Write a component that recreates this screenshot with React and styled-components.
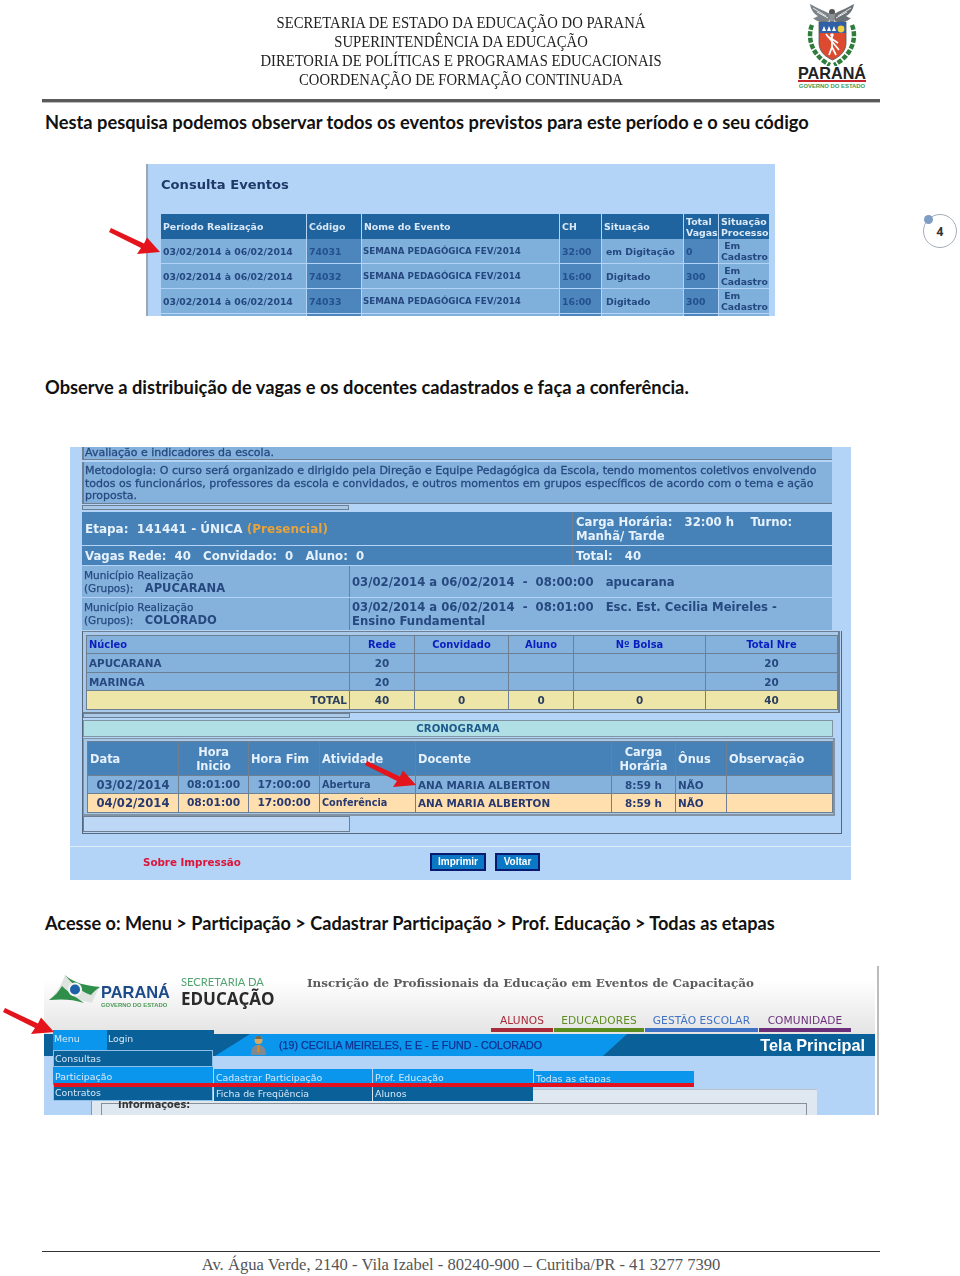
import React from "react";
import styled, { createGlobalStyle } from "styled-components";

const Global = createGlobalStyle`
  html, body { margin: 0; padding: 0; background: #fff; }
  #root { width: 960px; height: 1276px; overflow: hidden; }
`;

const Page = styled.div`
  width: 960px; height: 1276px; display: flex; flex-direction: column; position: relative;
  overflow: hidden; background: #fff; color: #111; font-family: "Liberation Sans", sans-serif;
`;

/* ---------- header ---------- */
const Header = styled.header`
  margin: 0 80px 0 42px; height: 102px; box-sizing: border-box; display: grid;
  grid-template-columns: 1fr 520px 1fr; border-bottom: 3px solid #5a5a5a; box-shadow: 0 1px 0 #bbb;
`;
const HeaderTitles = styled.div`
  grid-column: 2; padding-top: 13px; text-align: center; color: #222; white-space: nowrap;
  font: 400 16.4px/19px "Liberation Serif", serif; transform: scaleX(0.895);
`;
const LogoBox = styled.div`
  grid-column: 3; margin: 3px 0 0 77px; width: 68px; display: flex; flex-direction: column; align-items: center;
`;
const LogoWord = styled.div`
  font: 700 16.2px/14px "Liberation Sans", sans-serif; color: #222; border-bottom: 2px solid #c8252c; width: 68px; text-align: center; height: 14px;
`;
const LogoSub = styled.div`
  font: 700 5.9px/8px "Liberation Sans", sans-serif; color: #3f9a52; white-space: nowrap;
`;

const Heading = styled.h2`
  margin: ${p => p.$top}px 0 0 45px; font: 700 ${p => p.$size}px/22px Lato, "Noto Sans", sans-serif; color: #111; white-space: nowrap;
`;

/* ---------- consulta eventos ---------- */
const ConsultaRow = styled.div`
  margin: 31px 0 0 146px; display: flex; align-items: flex-start;
`;
const ConsultaShot = styled.section`
  width: 629px; height: 152px; box-sizing: border-box; overflow: hidden; background: #b3d3f7;
  border-left: 2px solid #9aa7b5; padding-left: 13px; filter: blur(0.3px);
`;
const ConsultaTitle = styled.h3`
  margin: 0; height: 50px; font: 700 13.1px/41px "DejaVu Sans", sans-serif; color: #1f3a68;
`;
const ConsultaGrid = styled.div`
  display: grid; grid-template-columns: 145px 54px 197px 41px 81px 34px 50px; column-gap: 1px; row-gap: 1px;
  grid-auto-rows: 24px; width: 608px;
`;
const ConsultaHead = styled.div`
  background: #1f639f; color: #dbe9f7; font: 700 9.4px/11px "DejaVu Sans", sans-serif; padding: 0 2px;
  display: flex; align-items: center; height: 25px; margin-bottom: -1px;
`;
const ConsultaCell = styled.div`
  background: ${p => (p.$dark ? "#4c86bd" : "#7fb0dc")}; color: ${p => (p.$dark ? "#24508c" : "#24477e")};
  font: 700 ${p => p.$size || 9.3}px/11px "DejaVu Sans", sans-serif; padding: ${p => p.$pad || "0 2px"};
  display: flex; align-items: center; white-space: nowrap; overflow: hidden;
`;
const PageBadge = styled.div`
  margin: 50px 0 0 148px; width: 34px; height: 34px; box-sizing: border-box; border: 1px solid #a5adb8; border-radius: 50%;
  position: relative; display: flex; align-items: center; justify-content: center; font: 700 12px "Noto Sans", sans-serif; color: #333;
  &::before { content: ""; position: absolute; left: 0; top: 0; width: 9px; height: 9px; border-radius: 50%; background: #7f9cc4; }
`;

/* ---------- form shot ---------- */
const FormShot = styled.section`
  margin: 49px 0 0 70px; width: 781px; height: 433px; background: #b3d3f7; display: flex; flex-direction: column; overflow: hidden;
  font-family: "DejaVu Sans", sans-serif; color: #27497f; filter: blur(0.3px);
`;
const FormBody = styled.div`
  padding-left: 12px; display: flex; flex-direction: column;
`;
const TextRow = styled.div`
  width: 750px; height: ${p => p.$h}px; box-sizing: border-box; background: #85b2dd; border-left: 2px solid #6d7f90;
  border-bottom: 1px solid #6d7f90; padding: ${p => p.$pt || 0}px 0 0 1px; margin-bottom: ${p => p.$mb || 0}px;
  font: 400 11px/12.5px "DejaVu Sans", sans-serif; -webkit-text-stroke: 0.3px #27497f; white-space: nowrap;
`;
const ThinTab = styled.div`
  width: 267px; height: ${p => p.$h}px; box-sizing: border-box; border: 1px solid #6d7f90; background: ${p => p.$bg || "#a9c9ea"}; margin: ${p => p.$m || 0};
`;
const HeadRow = styled.div`
  width: 750px; height: ${p => p.$h}px; display: grid; grid-template-columns: 490px 259px; column-gap: 1px; margin-bottom: 1px; background: #6d7f90;
`;
const HeadCell = styled.div`
  background: #4682b8; color: #e6f1fb; font: 700 ${p => p.$size || 11.7}px/14px "DejaVu Sans", sans-serif; padding: 0 2px 0 3px; display: flex; align-items: center; white-space: nowrap;
`;
const Presencial = styled.span`
  color: #e8a33a;
`;
const PlaceRow = styled.div`
  width: 750px; height: ${p => p.$h}px; display: grid; grid-template-columns: 267px 482px; column-gap: 1px; margin-bottom: 1px; background: #6d7f90;
`;
const PlaceCell = styled.div`
  background: #85b2dd; color: #27497f; padding: 0 2px; display: flex; flex-direction: column; justify-content: center; white-space: nowrap;
  font: 700 11.65px/14px "DejaVu Sans", sans-serif;
`;
const PlaceSmall = styled.div`
  font: 400 10.5px/13px "DejaVu Sans", sans-serif; -webkit-text-stroke: 0.25px #27497f;
  b { font: 700 11.5px/13px "DejaVu Sans", sans-serif; margin-left: 8px; -webkit-text-stroke: 0; }
`;
const Frame = styled.div`
  width: 760px; height: 203px; box-sizing: border-box; border: 1px solid #56687a; border-top-width: 0; display: flex; flex-direction: column; align-items: flex-start;
`;
const NucleoBox = styled.div`
  width: 757px; height: 82px; box-sizing: border-box; border: 1px solid #6d7f90; border-left: 0; padding: 4px 2px 0 4px;
  background: #a9c9ea; flex: none; border-right-width: 2px;
`;
const DataGrid = styled.div`
  display: grid; grid-template-columns: ${p => p.$cols}; grid-template-rows: ${p => p.$rows}; gap: ${p => p.$gap || "1px"}; background: #6d7f90; width: max-content;
  border: 1px solid #6d7f90; margin: -1px;
`;
const Cell = styled.div`
  background: ${p => ({ blue: "#85b2dd", gold: "#eee6a8", peach: "#ffdfae", head: "#4682b8" }[p.$tone])};
  color: ${p => ({ blue: "#27497f", gold: "#2b3f5f", peach: "#27396f", head: "#e6f1fb" }[p.$tone])};
  font: 700 ${p => p.$size || 10.4}px/${p => (p.$tall ? 14 : 12.5)}px "DejaVu Sans", sans-serif;
  padding: 1px 2px 0; display: flex; align-items: center; justify-content: ${p => (p.$center ? "center" : p.$right ? "flex-end" : "flex-start")};
  text-align: ${p => (p.$center ? "center" : "left")}; white-space: nowrap; overflow: hidden;
`;
const NucleoHead = styled(Cell)`
  color: #0a1ec0; font-size: 9.9px;
`;
const CronoBar = styled.div`
  width: 750px; height: 17px; box-sizing: border-box; margin-top: 2px; background: #b0e0e6; border: 1px solid #7f95a5; flex: none;
  font: 700 10.2px/16px "DejaVu Sans", sans-serif; text-align: center; color: #1f5a8c;
`;
const CronoBox = styled.div`
  width: 752px; height: 78px; box-sizing: border-box; margin-top: 1px; border: 1px solid #8293a3; border-right-width: 2px; border-bottom-width: 2px;
  padding: 3px 0 0 4px; background: #a9c9ea; flex: none;
`;
const FormFooter = styled.div`
  margin-top: 12px; height: 35px; border-top: 1px solid #e0ecfa; display: flex; align-items: center; padding-bottom: 3px; box-sizing: border-box;
`;
const PrintNote = styled.div`
  width: 360px; box-sizing: border-box; padding-left: 73px; color: #dc1438; font: 700 10.3px "DejaVu Sans", sans-serif;
`;
const ActionButton = styled.div`
  height: 18px; width: ${p => p.$w}px; box-sizing: border-box; background: #0a78c4; border: 2px solid #0a1a70; margin-right: 9px;
  color: #fff; font: 700 10px/14px "Liberation Sans", sans-serif; text-align: center;
`;

/* ---------- portal shot ---------- */
const PortalShot = styled.section`
  margin: 32px 0 0 44px; width: 835px; height: 149px; box-sizing: border-box; position: relative; background: #fff; padding-right: 2px; border-right: 2px solid #bcbcbc; overflow: hidden;
  font-family: "DejaVu Sans", sans-serif; filter: blur(0.3px);
`;
const BrandRow = styled.div`
  height: 68px; box-sizing: border-box; background: linear-gradient(#fff, #fff 20%, #e4e4e4); display: grid; grid-template-columns: 263px 1fr;
`;
const BrandLogos = styled.div`
  display: flex; padding: 9px 0 0 5px;
`;
const ParanaBlock = styled.div`
  margin: 9px 0 0 0; width: 80px; display: flex; flex-direction: column;
`;
const ParanaWord = styled.div`
  font: 700 16.4px/16px "Liberation Sans", sans-serif; color: #1c4b8c;
`;
const ParanaSub = styled.div`
  font: 700 5.9px/8px "Liberation Sans", sans-serif; color: #4a9a55; white-space: nowrap; margin-top: 1px;
`;
const SecBlock = styled.div`
  display: flex; flex-direction: column;
`;
const SecLine = styled.div`
  font: 400 11.2px/14px Lato, sans-serif; color: #4fa46f; white-space: nowrap;
`;
const EduLine = styled.div`
  font: 700 17px/19px "Open Sans", sans-serif; color: #2a2a2a; white-space: nowrap;
`;
const BrandRight = styled.div`
  display: flex; flex-direction: column; justify-content: space-between;
`;
const BrandTitle = styled.div`
  margin-top: 10px; font: 700 11.95px/15px "DejaVu Serif", serif; color: #5c5c5c; white-space: nowrap;
`;
const AreaTabs = styled.div`
  margin: 0 0 2px 184px; width: 361px; display: grid; grid-template-columns: 62px 90px 113px 92px; column-gap: 1px;
`;
const AreaTab = styled.div`
  text-align: center; font: 400 10.6px/16px "DejaVu Sans", sans-serif; letter-spacing: .1px; color: ${p => p.$c}; border-bottom: 4px solid ${p => p.$c}; white-space: nowrap;
`;
const NavBand = styled.div`
  height: 22px; background: #0a6098; display: flex;
`;
const NavCenter = styled.div`
  margin-left: 171px; width: 412px; box-sizing: border-box; background: #0a96ec; display: flex; align-items: center; padding-left: 36px; gap: 13px;
  clip-path: polygon(35px 0, 100% 0, calc(100% - 24px) 100%, 0 100%);
  color: #12308f; font: 400 10.7px "Liberation Sans", sans-serif; white-space: nowrap; -webkit-text-stroke: .25px #12308f;
`;
const NavTitle = styled.div`
  margin-left: auto; padding-right: 10px; font: 700 16.3px/22px "Liberation Sans", sans-serif; color: #fff;
`;
const ContentArea = styled.div`
  height: 59px; background: #b3d3f7; padding: 33px 0 0 47px; box-sizing: border-box;
`;
const ContentCard = styled.div`
  width: 726px; height: 30px; box-sizing: border-box; background: #dfe8f0; border-left: 1px solid #8a96a2; border-top: 1px solid #b9c2ca; padding: 13px 0 0 9px;
`;
const InnerFrame = styled.div`
  width: 706px; height: 30px; box-sizing: border-box; border: 1px solid #8a8f96; border-bottom: 0; padding-left: 16px;
  font: 700 9.8px/1px "DejaVu Sans", sans-serif; color: #333; position: relative; white-space: nowrap;
  &::after { content: ""; position: absolute; left: 368px; width: 248px; top: 11px; height: 1px; background: #8a8f96; }
`;
const MenuLayer = styled.div`
  position: absolute; left: 9px; top: 64px; display: flex; flex-direction: column;
  font: 400 9.4px/15px "DejaVu Sans", sans-serif; color: #d5e8fa; white-space: nowrap;
`;
const MenuTabs = styled.div`
  display: flex; height: 20px;
`;
const MenuTab = styled.div`
  width: ${p => p.$w}px; box-sizing: border-box; padding: 1px 0 0 1px; background: ${p => (p.$on ? "#0a96ec" : "#0a6098")};
`;
const MenuBody = styled.div`
  display: flex; align-items: flex-start;
`;
const MenuColumn = styled.div`
  display: flex; flex-direction: column; width: ${p => p.$w}px; margin-top: ${p => p.$top || 0}px; margin-right: ${p => p.$mr || 0}px;
`;
const MenuItem = styled.div`
  height: ${p => p.$h || 17}px; box-sizing: border-box; padding: ${p => p.$pad || "1px 0 0 2px"}; background: ${p => (p.$on ? "#0a96ec" : "#0a6098")};
  outline: ${p => (p.$framed ? "1px solid #8fbfe6" : "none")}; outline-offset: -1px;
`;
const RedRule = styled.div`
  position: absolute; left: 10px; top: 117px; width: 640px; height: 4px; background: #e3101e;
`;

/* ---------- footer ---------- */
const Footer = styled.footer`
  margin: 136px 80px 0 42px; border-top: 1px solid #333; padding-top: 3px; text-align: center;
  font: 400 16.6px/19px "Liberation Serif", serif; color: #555; white-space: nowrap;
`;
const ArrowSvg = styled.svg`
  position: absolute; left: ${p => p.$x}px; top: ${p => p.$y}px; overflow: visible;
`;

const Arrow = ({ x, y }) => (
  <ArrowSvg $x={x} $y={y} width="50" height="25" viewBox="0 0 50 25">
    <path d="M1 0 L34 15.5 L37 9.5 L50 24 L27 26 L31 20 L-1 4 Z" fill="#e3141c" />
  </ArrowSvg>
);

const CoatOfArms = () => (
  <svg width="62" height="63" viewBox="0 0 62 63">
    <path d="M31 12 C26 9 18 6 9 1 C10 7 13 11 17 13 C15 14 14 15 12 15 C17 20 24 20 28 18 Z" fill="#7d8489" />
    <path d="M31 12 C36 9 44 6 53 1 C52 7 49 11 45 13 C47 14 48 15 50 15 C45 20 38 20 34 18 Z" fill="#6b7277" />
    <path d="M12 5 L25 13 M50 5 L37 13 M16 9 L27 15 M46 9 L35 15" stroke="#e8e8e8" strokeWidth="1" />
    <circle cx="31" cy="9" r="3" fill="#555" />
    <path d="M28 11 H34 L33 19 H29 Z" fill="#8c9196" />
    <path d="M11 22 C6 34 10 52 29 62" fill="none" stroke="#2f7d3a" strokeWidth="4.5" strokeDasharray="5 1.5" />
    <path d="M51 22 C56 34 52 52 33 62" fill="none" stroke="#2f7d3a" strokeWidth="4.5" strokeDasharray="5 1.5" />
    <path d="M18 19 H45 V40 C45 49 38 54 31.5 57 C25 54 18 49 18 40 Z" fill="#dc4a30" stroke="#555" strokeWidth="0.8" />
    <path d="M18 19 H45 V30 H18 Z" fill="#2f5fa6" />
    <path d="M21 28 L23 23 L25 28 Z M26 28 L28 23 L30 28 Z M31 28 L33 23 L35 28 Z" fill="#fff" />
    <circle cx="40" cy="26" r="3.4" fill="#f2d23c" />
    <path d="M31 33 L31 44 L28 52 M31 44 L35 52 M31 36 L26 33 M31 36 L37 40 M25 31 L38 47" stroke="#fff" strokeWidth="1.7" fill="none" />
    <circle cx="31" cy="32" r="1.8" fill="#fff" />
  </svg>
);

const FlagLogo = () => (
  <svg width="52" height="30" viewBox="0 0 52 30">
    <path d="M0 25 C7 19 13 9 16 0 C25 8 38 11 51 12 C47 18 45 23 43 28 C30 24 14 23 0 25Z" fill="#dfe3e0" />
    <path d="M16 0 C24 8 38 11 51 12 C47 15 44 17 42 20 C33 17 23 9 16 0Z" fill="#2f8f4a" />
    <path d="M0 25 C6 21 10 16 13 11 C19 17 28 23 35 28 C24 24 12 24 0 25Z" fill="#2f8f4a" />
    <circle cx="26" cy="14.5" r="7" fill="#f2f4f2" />
    <circle cx="26" cy="14.5" r="5" fill="#1f5fa8" />
  </svg>
);

const Avatar = () => (
  <svg width="15" height="20" viewBox="0 0 15 20">
    <circle cx="7.5" cy="5" r="4" fill="#d9a860" />
    <path d="M4 3 C5 0 10 0 11 3 L11 4 L4 4 Z" fill="#7a6a50" />
    <path d="M0 20 C0 13 3 10 7.5 10 C12 10 15 13 15 20 Z" fill="#7f8a90" />
    <path d="M6.5 10 H8.5 L9 16 L7.5 18 L6 16 Z" fill="#d8862c" />
  </svg>
);

const consultaRows = [
  ["74031", "32:00", "em Digitação", "0"],
  ["74032", "16:00", "Digitado", "300"],
  ["74033", "16:00", "Digitado", "300"],
];

const NucleoCols = "262px 64px 93px 64px 131px 131px";
const CronoCols = "90px 69px 70px 95px 195px 63px 50px 105px";

const cronoHead = [
  ["Data", false], ["Hora\nInicio", true], ["Hora Fim", false], ["Atividade", false],
  ["Docente", false], ["Carga\nHorária", true], ["Ônus", false], ["Observação", false],
];
const cronoRows = [
  ["blue", "03/02/2014", "08:01:00", "17:00:00", "Abertura"],
  ["peach", "04/02/2014", "08:01:00", "17:00:00", "Conferência"],
];

export default function App() {
  return (
    <Page>
      <Global />
      <Header>
        <HeaderTitles>
          SECRETARIA DE ESTADO DA EDUCAÇÃO DO PARANÁ<br />
          SUPERINTENDÊNCIA DA EDUCAÇÃO<br />
          DIRETORIA DE POLÍTICAS E PROGRAMAS EDUCACIONAIS<br />
          COORDENAÇÃO DE FORMAÇÃO CONTINUADA
        </HeaderTitles>
        <LogoBox>
          <CoatOfArms />
          <LogoWord>PARANÁ</LogoWord>
          <LogoSub>GOVERNO DO ESTADO</LogoSub>
        </LogoBox>
      </Header>

      <Heading $top={9} $size={18.28}>Nesta pesquisa podemos observar todos os eventos previstos para este período e o seu código</Heading>

      <ConsultaRow>
        <ConsultaShot>
          <ConsultaTitle>Consulta Eventos</ConsultaTitle>
          <ConsultaGrid>
            <ConsultaHead>Período Realização</ConsultaHead>
            <ConsultaHead>Código</ConsultaHead>
            <ConsultaHead>Nome do Evento</ConsultaHead>
            <ConsultaHead>CH</ConsultaHead>
            <ConsultaHead>Situação</ConsultaHead>
            <ConsultaHead>Total<br />Vagas</ConsultaHead>
            <ConsultaHead>Situação<br />Processo</ConsultaHead>
            {consultaRows.map(r => (
              <React.Fragment key={r[0]}>
                <ConsultaCell>03/02/2014 à 06/02/2014</ConsultaCell>
                <ConsultaCell $dark>{r[0]}</ConsultaCell>
                <ConsultaCell $size={8.7} $pad="1px 1px 0">SEMANA PEDAGÓGICA FEV/2014</ConsultaCell>
                <ConsultaCell $dark>{r[1]}</ConsultaCell>
                <ConsultaCell $pad="0 0 0 4px">{r[2]}</ConsultaCell>
                <ConsultaCell $dark>{r[3]}</ConsultaCell>
                <ConsultaCell><div>&nbsp;Em<br />Cadastro</div></ConsultaCell>
              </React.Fragment>
            ))}
            {[0, 1, 2, 3, 4, 5, 6].map(i => <ConsultaCell key={i} $dark={i % 2 === 1} />)}
          </ConsultaGrid>
        </ConsultaShot>
        <PageBadge>4</PageBadge>
      </ConsultaRow>

      <Heading $top={60} $size={18.29}>Observe a distribuição de vagas e os docentes cadastrados e faça a conferência.</Heading>

      <FormShot>
        <FormBody>
          <TextRow $h={13} $mb={2}>Avaliação e indicadores da escola.</TextRow>
          <TextRow $h={42} $mb={1} $pt={3}>
            Metodologia: O curso será organizado e dirigido pela Direção e Equipe Pedagógica da Escola, tendo momentos coletivos envolvendo<br />
            todos os funcionários, professores da escola e convidados, e outros momentos em grupos específicos de acordo com o tema e ação<br />
            proposta.
          </TextRow>
          <ThinTab $h={5} $m="0 0 2px" />
          <HeadRow $h={33}>
            <HeadCell $size={12}>Etapa:&nbsp; 141441 - ÚNICA&nbsp; <Presencial>(Presencial)</Presencial></HeadCell>
            <HeadCell><div>Carga Horária:&nbsp;&nbsp; 32:00 h&nbsp;&nbsp;&nbsp; Turno:<br />Manhã/ Tarde</div></HeadCell>
          </HeadRow>
          <HeadRow $h={19}>
            <HeadCell>Vagas Rede:&nbsp; 40&nbsp;&nbsp; Convidado:&nbsp; 0&nbsp;&nbsp; Aluno:&nbsp; 0</HeadCell>
            <HeadCell>Total:&nbsp;&nbsp; 40</HeadCell>
          </HeadRow>
          <PlaceRow $h={31}>
            <PlaceCell>
              <PlaceSmall>Município Realização</PlaceSmall>
              <PlaceSmall>(Grupos): <b>APUCARANA</b></PlaceSmall>
            </PlaceCell>
            <PlaceCell>03/02/2014 a 06/02/2014&nbsp; -&nbsp; 08:00:00&nbsp;&nbsp; apucarana</PlaceCell>
          </PlaceRow>
          <PlaceRow $h={32}>
            <PlaceCell>
              <PlaceSmall>Município Realização</PlaceSmall>
              <PlaceSmall>(Grupos): <b>COLORADO</b></PlaceSmall>
            </PlaceCell>
            <PlaceCell>
              <div>03/02/2014 a 06/02/2014&nbsp; -&nbsp; 08:01:00&nbsp;&nbsp; Esc. Est. Cecilia Meireles -</div>
              <div>Ensino Fundamental</div>
            </PlaceCell>
          </PlaceRow>
          <Frame>
            <NucleoBox>
              <DataGrid $cols={NucleoCols} $rows="17px 17.5px 17.5px 17.5px">
                <NucleoHead $tone="blue">Núcleo</NucleoHead>
                <NucleoHead $tone="blue" $center>Rede</NucleoHead>
                <NucleoHead $tone="blue" $center>Convidado</NucleoHead>
                <NucleoHead $tone="blue" $center>Aluno</NucleoHead>
                <NucleoHead $tone="blue" $center>Nº Bolsa</NucleoHead>
                <NucleoHead $tone="blue" $center>Total Nre</NucleoHead>
                {["APUCARANA", "MARINGA"].map(n => (
                  <React.Fragment key={n}>
                    <Cell $tone="blue">{n}</Cell>
                    <Cell $tone="blue" $center>20</Cell>
                    <Cell $tone="blue" />
                    <Cell $tone="blue" />
                    <Cell $tone="blue" />
                    <Cell $tone="blue" $center>20</Cell>
                  </React.Fragment>
                ))}
                <Cell $tone="gold" $right>TOTAL</Cell>
                <Cell $tone="gold" $center>40</Cell>
                <Cell $tone="gold" $center>0</Cell>
                <Cell $tone="gold" $center>0</Cell>
                <Cell $tone="gold" $center>0</Cell>
                <Cell $tone="gold" $center>40</Cell>
              </DataGrid>
            </NucleoBox>
            <ThinTab $h={5} />
            <CronoBar>CRONOGRAMA</CronoBar>
            <CronoBox>
              <DataGrid $cols={CronoCols} $rows="33px 17px 17.5px">
                {cronoHead.map(([t, c]) => (
                  <Cell key={t} $tone="head" $center={c} $size={11.4} $tall>
                    {t.includes("\n") ? <div>{t.split("\n")[0]}<br />{t.split("\n")[1]}</div> : t}
                  </Cell>
                ))}
                {cronoRows.map(([tone, d, a, b, act]) => (
                  <React.Fragment key={d}>
                    <Cell $tone={tone} $center $size={11.6}>{d}</Cell>
                    <Cell $tone={tone} $center $size={10.7}>{a}</Cell>
                    <Cell $tone={tone} $center $size={10.7}>{b}</Cell>
                    <Cell $tone={tone} $size={9.7}>{act}</Cell>
                    <Cell $tone={tone} $size={10.4}>ANA MARIA ALBERTON</Cell>
                    <Cell $tone={tone} $center>8:59 h</Cell>
                    <Cell $tone={tone}>NÃO</Cell>
                    <Cell $tone={tone} />
                  </React.Fragment>
                ))}
              </DataGrid>
            </CronoBox>
            <ThinTab $h={16} $bg="#bdd8f6" />
          </Frame>
        </FormBody>
        <FormFooter>
          <PrintNote>Sobre Impressão</PrintNote>
          <ActionButton $w={56}>Imprimir</ActionButton>
          <ActionButton $w={45}>Voltar</ActionButton>
        </FormFooter>
      </FormShot>

      <Heading $top={32} $size={18.13}>Acesse o: Menu &gt; Participação &gt; Cadastrar Participação &gt; Prof. Educação &gt; Todas as etapas</Heading>

      <PortalShot>
        <BrandRow>
          <BrandLogos>
            <FlagLogo />
            <ParanaBlock>
              <ParanaWord>PARANÁ</ParanaWord>
              <ParanaSub>GOVERNO DO ESTADO</ParanaSub>
            </ParanaBlock>
            <SecBlock>
              <SecLine>SECRETARIA DA</SecLine>
              <EduLine>EDUCAÇÃO</EduLine>
            </SecBlock>
          </BrandLogos>
          <BrandRight>
            <BrandTitle>Inscrição de Profissionais da Educação em Eventos de Capacitação</BrandTitle>
            <AreaTabs>
              <AreaTab $c="#a82a38">ALUNOS</AreaTab>
              <AreaTab $c="#5b8c1e">EDUCADORES</AreaTab>
              <AreaTab $c="#3f72c4">GESTÃO ESCOLAR</AreaTab>
              <AreaTab $c="#6b2f7a">COMUNIDADE</AreaTab>
            </AreaTabs>
          </BrandRight>
        </BrandRow>
        <NavBand>
          <NavCenter><Avatar />(19) CECILIA MEIRELES, E E - E FUND - COLORADO</NavCenter>
          <NavTitle>Tela Principal</NavTitle>
        </NavBand>
        <ContentArea>
          <ContentCard>
            <InnerFrame>Informações:</InnerFrame>
          </ContentCard>
        </ContentArea>
        <MenuLayer>
          <MenuTabs>
            <MenuTab $w={54} $on>Menu</MenuTab>
            <MenuTab $w={107}>Login</MenuTab>
          </MenuTabs>
          <MenuBody>
            <MenuColumn $w={160} $mr={1}>
              <MenuItem $framed>Consultas</MenuItem>
              <MenuItem $on $h={18} $pad="2px 0 0 2px">Participação</MenuItem>
              <MenuItem $framed $h={16} $pad="0 0 0 2px">Contratos</MenuItem>
            </MenuColumn>
            <MenuColumn $w={158} $mr={1} $top={19}>
              <MenuItem $on $h={17}>Cadastrar Participação</MenuItem>
              <MenuItem $h={15} $pad="0 0 0 2px">Ficha de Freqüência</MenuItem>
            </MenuColumn>
            <MenuColumn $w={160} $mr={1} $top={19}>
              <MenuItem $on $h={17}>Prof. Educação</MenuItem>
              <MenuItem $h={15} $pad="0 0 0 2px">Alunos</MenuItem>
            </MenuColumn>
            <MenuColumn $w={160} $top={21}>
              <MenuItem $on $h={15} $pad="0 0 0 2px">Todas as etapas</MenuItem>
            </MenuColumn>
          </MenuBody>
        </MenuLayer>
        <RedRule />
      </PortalShot>

      <Footer>Av. Água Verde, 2140 - Vila Izabel - 80240-900 – Curitiba/PR - 41 3277 7390</Footer>

      <Arrow x={110} y={228} />
      <Arrow x={366} y={761} />
      <Arrow x={4} y={1008} />
    </Page>
  );
}
